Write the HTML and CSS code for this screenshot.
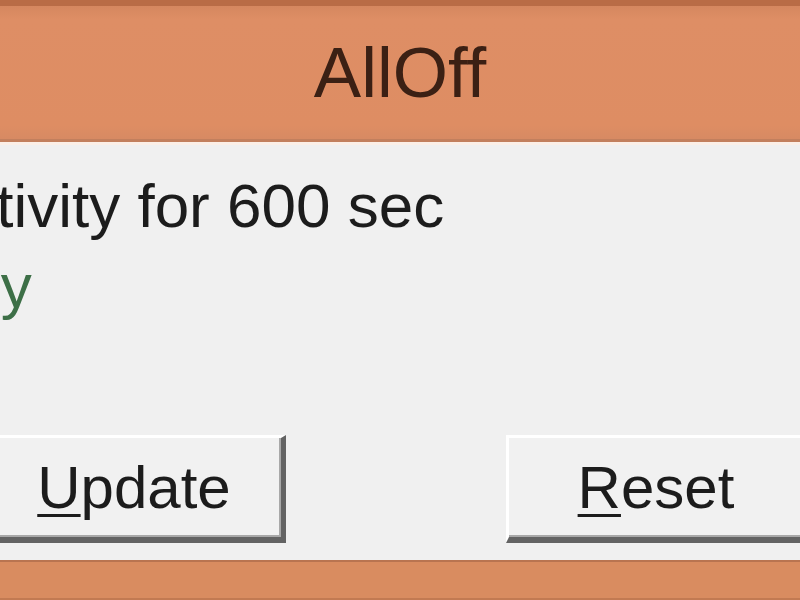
FILE: index.html
```html
<!DOCTYPE html>
<html lang="en">
<head>
    <meta charset="UTF-8">
    <meta name="viewport" content="width=device-width, initial-scale=1.0">
    <title>AllOff</title>
    <link rel="stylesheet" href="styles.css">
</head>
<body>

    <div class="window">
        <div class="titlebar">
            <span class="title">AllOff</span>
        </div>

        <div class="panel">
            <p class="message">Inactivity for 600 sec</p>
            <p class="status">Busy</p>

            <div class="buttons">
                <button class="btn"><u>U</u>pdate</button>
                <button class="btn"><u>R</u>eset</button>
            </div>
        </div>

        <div class="statusbar"></div>
    </div>

</body>
</html>
```

FILE: styles.css
```css
html, body {
    margin: 0;
    overflow: hidden;
    background: #f0f0f0;
    font-family: "Liberation Sans", Arial, sans-serif;
}

.window {
    width: 1200px;
    margin-left: -200px;
}

.titlebar {
    height: 133px;
    border-top: 6px solid #b96c46;
    border-bottom: 3px solid #c27f5d;
    background: linear-gradient(to bottom, #d5875f, #de8e65 10%, #de8d63 90%, #d78a63);
    text-align: center;
}

.title {
    font-size: 71px;
    line-height: 133px;
    color: #3b2014;
}

.panel {
    display: flex;
    flex-direction: column;
    height: 377px;
    padding: 21px 0 17px 79px;
    border-top: 3px solid #fbefe7;
    background: #f0f0f0;
}

.message, .status {
    margin: 0;
    font-size: 62px;
    line-height: 80px;
    color: #1c1c1c;
}

.status {
    padding-left: 15px;
    color: #3d6f47;
}

.buttons {
    margin-top: auto;
    margin-left: -79px;
    display: flex;
    justify-content: center;
    gap: 220px;
    padding-right: 8px;
}

.btn {
    width: 302px;
    height: 108px;
    padding: 0;
    background: #f1f1f1;
    border-top: 3px solid #ffffff;
    border-left: 3px solid #ffffff;
    border-right: 5px solid #636363;
    border-bottom: 6px solid #636363;
    box-shadow: inset -2px -2px 0 #a8a8a8;
    font-family: "Liberation Sans", Arial, sans-serif;
    font-size: 60px;
    color: #1c1c1c;
}

.btn u {
    text-decoration-thickness: 3px;
    text-underline-offset: 6px;
}

.statusbar {
    height: 36px;
    border-top: 2px solid #b97450;
    border-bottom: 2px solid #c27a52;
    background: #d98c60;
}
```
